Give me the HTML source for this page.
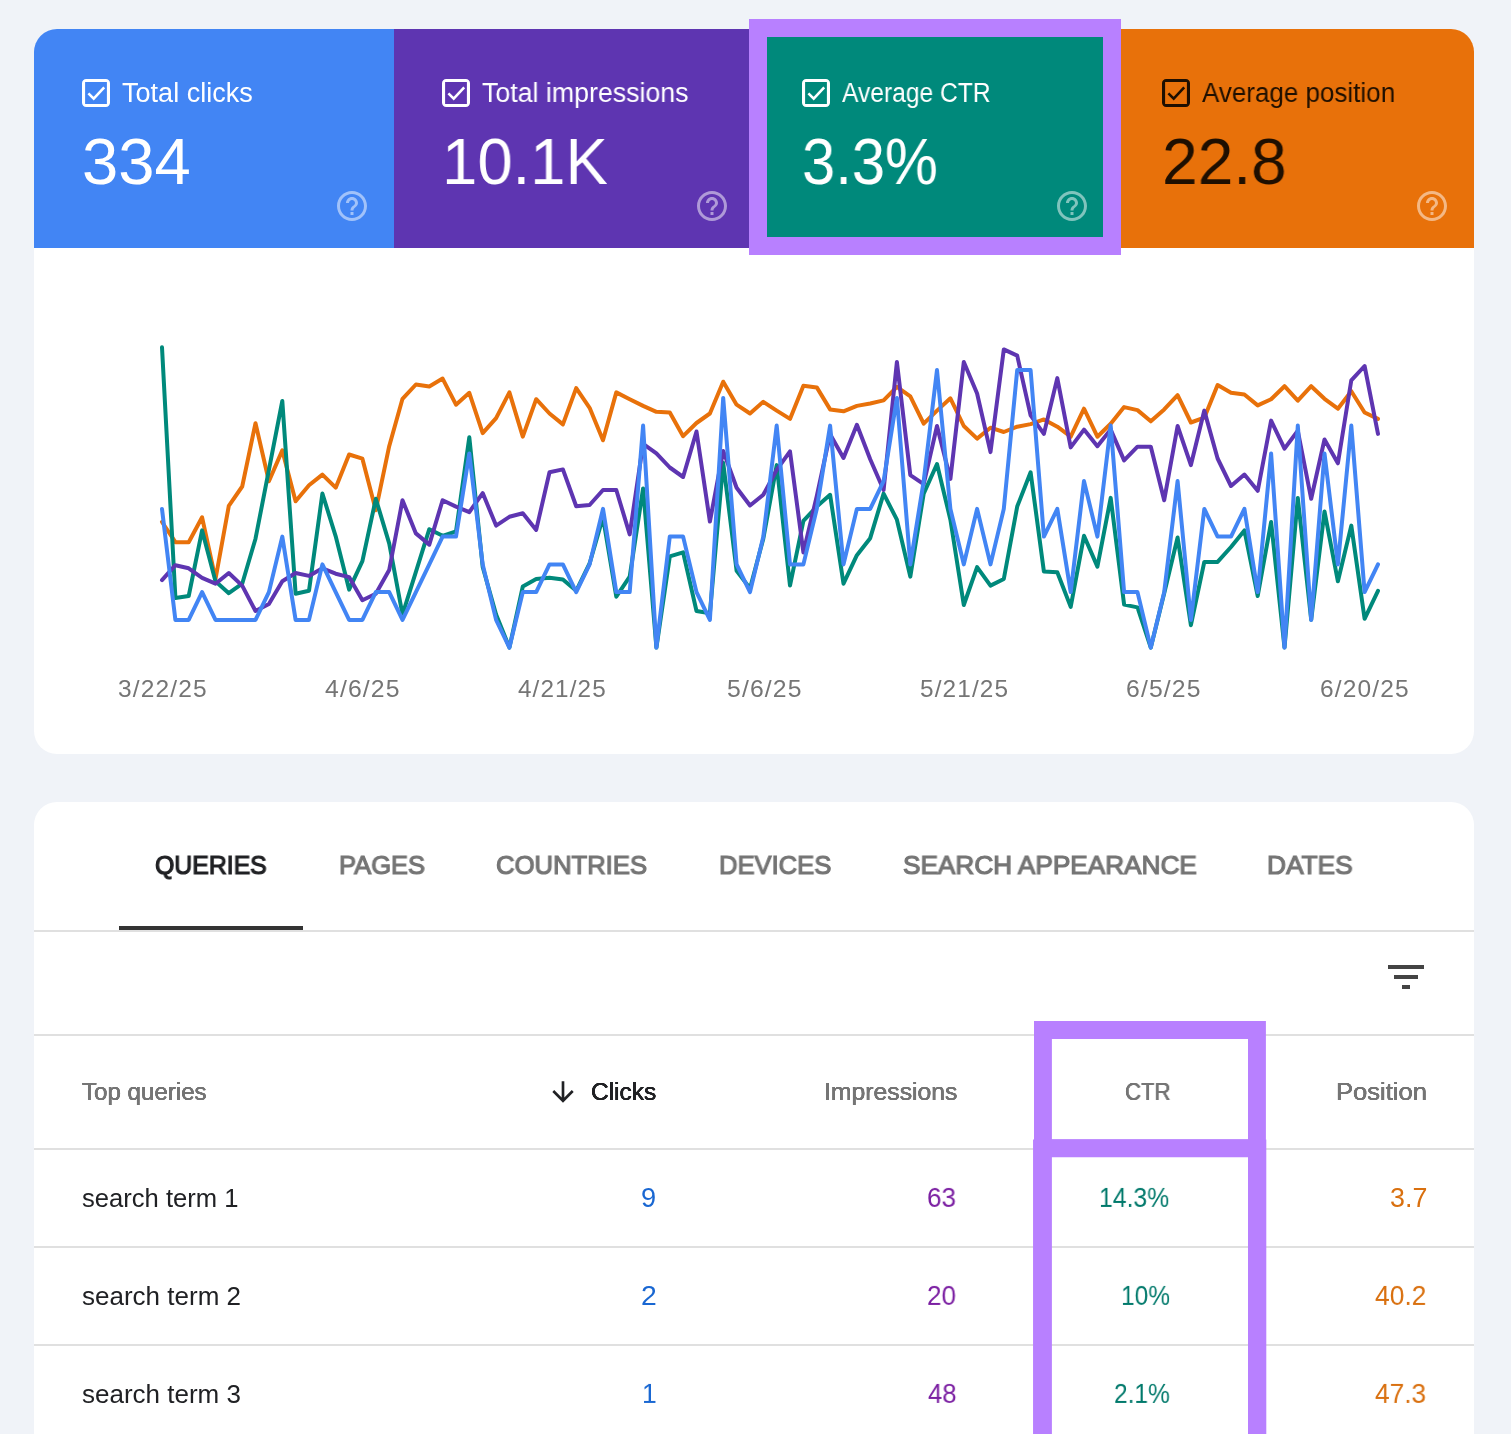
<!DOCTYPE html>
<html lang="en"><head><meta charset="utf-8"><title>Search Console performance</title>
<style>
html,body{margin:0;padding:0}
html{width:1511px;height:1434px;overflow:hidden;background:#f0f3f8}
body{width:1511px;height:1434px;overflow:hidden;background:#f0f3f8;font-family:"Liberation Sans", Arial, sans-serif;position:relative}
.abs{position:absolute;display:block}
.t{position:absolute;white-space:nowrap;transform-origin:0 0;font-weight:400;will-change:transform}
.card{position:absolute;left:34px;width:1440px;background:#fff;border-radius:23px;overflow:hidden}
.m{position:absolute;top:0;width:360px;height:219px}
.hl{position:absolute;box-sizing:border-box;border:18px solid #b880ff}
.ln{position:absolute;left:34px;width:1440px;height:2px;background:#e0e0e0}
</style></head><body>
<div class="card" style="top:29px;height:725px">
  <div class="m" style="left:0;background:#4285f4"></div>
  <div class="m" style="left:360px;background:#5e35b1"></div>
  <div class="m" style="left:720px;background:#00897b"></div>
  <div class="m" style="left:1080px;background:#e8710a"></div>
</div>
<div class="card" style="top:802px;height:632px;border-radius:23px 23px 0 0"></div>
<svg class="abs" style="left:82px;top:79px" width="28" height="28" viewBox="0 0 28 28"><path fill="#fff" fill-rule="evenodd" d="M4.2 0H23.8A4.2 4.2 0 0 1 28 4.2V23.8A4.2 4.2 0 0 1 23.8 28H4.2A4.2 4.2 0 0 1 0 23.8V4.2A4.2 4.2 0 0 1 4.2 0Z M3.1 3.1V24.9H24.9V3.1Z"/><polyline points="6.4,14.4 11.7,19.6 22.2,8.4" fill="none" stroke="#fff" stroke-width="2.6"/></svg><svg class="abs" style="left:442px;top:79px" width="28" height="28" viewBox="0 0 28 28"><path fill="#fff" fill-rule="evenodd" d="M4.2 0H23.8A4.2 4.2 0 0 1 28 4.2V23.8A4.2 4.2 0 0 1 23.8 28H4.2A4.2 4.2 0 0 1 0 23.8V4.2A4.2 4.2 0 0 1 4.2 0Z M3.1 3.1V24.9H24.9V3.1Z"/><polyline points="6.4,14.4 11.7,19.6 22.2,8.4" fill="none" stroke="#fff" stroke-width="2.6"/></svg><svg class="abs" style="left:802px;top:79px" width="28" height="28" viewBox="0 0 28 28"><path fill="#fff" fill-rule="evenodd" d="M4.2 0H23.8A4.2 4.2 0 0 1 28 4.2V23.8A4.2 4.2 0 0 1 23.8 28H4.2A4.2 4.2 0 0 1 0 23.8V4.2A4.2 4.2 0 0 1 4.2 0Z M3.1 3.1V24.9H24.9V3.1Z"/><polyline points="6.4,14.4 11.7,19.6 22.2,8.4" fill="none" stroke="#fff" stroke-width="2.6"/></svg><svg class="abs" style="left:1162px;top:79px" width="28" height="28" viewBox="0 0 28 28"><path fill="#1e0f01" fill-rule="evenodd" d="M4.2 0H23.8A4.2 4.2 0 0 1 28 4.2V23.8A4.2 4.2 0 0 1 23.8 28H4.2A4.2 4.2 0 0 1 0 23.8V4.2A4.2 4.2 0 0 1 4.2 0Z M3.1 3.1V24.9H24.9V3.1Z"/><polyline points="6.4,14.4 11.7,19.6 22.2,8.4" fill="none" stroke="#1e0f01" stroke-width="2.6"/></svg>
<svg class="abs" style="left:334px;top:188px" width="36" height="36" viewBox="0 0 24 24"><path fill="#fff" fill-opacity="0.5" d="M11 18h2v-2h-2v2zm1-16C6.48 2 2 6.48 2 12s4.48 10 10 10 10-4.48 10-10S17.52 2 12 2zm0 18c-4.41 0-8-3.59-8-8s3.59-8 8-8 8 3.59 8 8-3.59 8-8 8zm0-14c-2.21 0-4 1.79-4 4h2c0-1.1.9-2 2-2s2 .9 2 2c0 2-3 1.75-3 5h2c0-2.25 3-2.5 3-5 0-2.21-1.79-4-4-4z"/></svg><svg class="abs" style="left:694px;top:188px" width="36" height="36" viewBox="0 0 24 24"><path fill="#fff" fill-opacity="0.5" d="M11 18h2v-2h-2v2zm1-16C6.48 2 2 6.48 2 12s4.48 10 10 10 10-4.48 10-10S17.52 2 12 2zm0 18c-4.41 0-8-3.59-8-8s3.59-8 8-8 8 3.59 8 8-3.59 8-8 8zm0-14c-2.21 0-4 1.79-4 4h2c0-1.1.9-2 2-2s2 .9 2 2c0 2-3 1.75-3 5h2c0-2.25 3-2.5 3-5 0-2.21-1.79-4-4-4z"/></svg><svg class="abs" style="left:1054px;top:188px" width="36" height="36" viewBox="0 0 24 24"><path fill="#fff" fill-opacity="0.5" d="M11 18h2v-2h-2v2zm1-16C6.48 2 2 6.48 2 12s4.48 10 10 10 10-4.48 10-10S17.52 2 12 2zm0 18c-4.41 0-8-3.59-8-8s3.59-8 8-8 8 3.59 8 8-3.59 8-8 8zm0-14c-2.21 0-4 1.79-4 4h2c0-1.1.9-2 2-2s2 .9 2 2c0 2-3 1.75-3 5h2c0-2.25 3-2.5 3-5 0-2.21-1.79-4-4-4z"/></svg><svg class="abs" style="left:1414px;top:188px" width="36" height="36" viewBox="0 0 24 24"><path fill="#fff" fill-opacity="0.5" d="M11 18h2v-2h-2v2zm1-16C6.48 2 2 6.48 2 12s4.48 10 10 10 10-4.48 10-10S17.52 2 12 2zm0 18c-4.41 0-8-3.59-8-8s3.59-8 8-8 8 3.59 8 8-3.59 8-8 8zm0-14c-2.21 0-4 1.79-4 4h2c0-1.1.9-2 2-2s2 .9 2 2c0 2-3 1.75-3 5h2c0-2.25 3-2.5 3-5 0-2.21-1.79-4-4-4z"/></svg>
<svg class="abs" style="left:0;top:0" width="1511" height="300" viewBox="0 0 1511 300"><path fill="#b880ff" fill-rule="evenodd" d="M749 19H1121V255H749Z M767 37H1103V237H767Z"/></svg>
<svg class="abs" style="left:0;top:0" width="1511" height="760" viewBox="0 0 1511 760">
<polyline points="162.0,522.0 175.4,542.2 188.7,542.2 202.1,517.3 215.5,579.0 228.8,505.9 242.2,486.5 255.5,423.2 268.9,481.3 282.3,450.4 295.6,501.2 309.0,485.3 322.4,474.6 335.7,487.7 349.1,454.5 362.4,458.7 375.8,510.2 389.2,446.2 402.5,398.8 415.9,384.5 429.3,386.4 442.6,378.6 456.0,404.7 469.3,392.8 482.7,433.1 496.1,418.2 509.4,392.4 522.8,436.7 536.2,399.2 549.5,413.5 562.9,424.4 576.2,388.1 589.6,407.8 603.0,440.3 616.3,392.4 629.7,399.2 643.1,405.9 656.4,411.8 669.8,412.5 683.1,436.2 696.5,423.0 709.9,413.5 723.2,381.7 736.6,404.7 750.0,413.5 763.3,401.8 776.7,410.6 790.0,418.9 803.4,385.7 816.8,387.4 830.1,409.4 843.5,411.3 856.9,405.9 870.2,403.5 883.6,400.4 896.9,386.9 910.3,396.4 923.7,423.7 937.0,410.6 950.4,398.3 963.8,426.0 977.1,438.6 990.5,427.7 1003.8,432.0 1017.2,426.7 1030.6,424.1 1043.9,419.4 1057.3,426.7 1070.7,436.7 1084.0,408.7 1097.4,436.7 1110.7,423.7 1124.1,407.1 1137.5,410.1 1150.8,421.3 1164.2,409.4 1177.6,395.2 1190.9,422.5 1204.3,417.7 1217.6,385.0 1231.0,392.8 1244.4,394.5 1257.7,405.4 1271.1,399.2 1284.5,386.2 1297.8,400.7 1311.2,386.2 1324.5,398.8 1337.9,408.7 1351.3,391.2 1364.6,412.5 1378.0,418.9" fill="none" stroke="#e8710a" stroke-width="4" stroke-linejoin="round" stroke-linecap="round"/>
<polyline points="162.0,347.3 175.4,597.9 188.7,596.0 202.1,530.4 215.5,581.3 228.8,593.2 242.2,583.7 255.5,538.7 268.9,469.9 282.3,401.0 295.6,593.7 309.0,590.8 322.4,493.6 335.7,536.3 349.1,589.6 362.4,561.2 375.8,498.8 389.2,543.4 402.5,614.5 415.9,571.8 429.3,529.2 442.6,535.8 456.0,531.5 469.3,437.2 482.7,567.0 496.1,614.5 509.4,647.6 522.8,586.5 536.2,579.0 549.5,577.8 562.9,579.4 576.2,590.8 589.6,563.5 603.0,517.3 616.3,596.7 629.7,576.6 643.1,488.4 656.4,647.6 669.8,556.4 683.1,552.4 696.5,611.0 709.9,613.3 723.2,462.8 736.6,570.7 750.0,588.4 763.3,538.7 776.7,465.1 790.0,585.6 803.4,520.9 816.8,506.6 830.1,494.8 843.5,583.7 856.9,555.2 870.2,538.2 883.6,493.6 896.9,519.7 910.3,576.6 923.7,493.6 937.0,464.0 950.4,519.7 963.8,605.0 977.1,567.1 990.5,585.6 1003.8,579.0 1017.2,506.6 1030.6,472.3 1043.9,571.4 1057.3,572.3 1070.7,606.9 1084.0,535.8 1097.4,566.6 1110.7,497.9 1124.1,604.6 1137.5,607.4 1150.8,647.6 1164.2,593.2 1177.6,537.5 1190.9,625.2 1204.3,561.9 1217.6,561.9 1231.0,547.0 1244.4,530.4 1257.7,596.0 1271.1,522.0 1284.5,647.6 1297.8,497.9 1311.2,619.7 1324.5,511.4 1337.9,581.3 1351.3,525.6 1364.6,618.8 1378.0,590.8" fill="none" stroke="#00897b" stroke-width="4" stroke-linejoin="round" stroke-linecap="round"/>
<polyline points="162.0,580.1 175.4,565.2 188.7,568.3 202.1,577.8 215.5,583.7 228.8,573.0 242.2,585.6 255.5,611.0 268.9,603.9 282.3,581.3 295.6,573.0 309.0,575.9 322.4,568.3 335.7,573.7 349.1,577.1 362.4,600.3 375.8,593.7 389.2,570.0 402.5,500.2 415.9,533.4 429.3,544.6 442.6,500.2 456.0,506.6 469.3,512.1 482.7,493.1 496.1,525.6 509.4,516.8 522.8,513.3 536.2,529.9 549.5,472.3 562.9,469.4 576.2,506.2 589.6,505.0 603.0,490.0 616.3,490.0 629.7,534.4 643.1,443.8 656.4,453.3 669.8,467.5 683.1,477.0 696.5,431.5 709.9,521.6 723.2,450.9 736.6,487.7 750.0,505.5 763.3,494.8 776.7,469.9 790.0,451.4 803.4,552.4 816.8,496.0 830.1,434.3 843.5,458.0 856.9,424.8 870.2,459.2 883.6,490.0 896.9,362.0 910.3,475.1 923.7,484.1 937.0,426.0 950.4,478.9 963.8,362.0 977.1,393.5 990.5,452.1 1003.8,349.4 1017.2,355.6 1030.6,415.4 1043.9,433.9 1057.3,378.1 1070.7,447.4 1084.0,429.6 1097.4,446.2 1110.7,429.6 1124.1,460.4 1137.5,446.7 1150.8,446.7 1164.2,500.2 1177.6,426.0 1190.9,465.1 1204.3,410.6 1217.6,458.5 1231.0,486.0 1244.4,474.6 1257.7,490.8 1271.1,420.6 1284.5,448.6 1297.8,430.8 1311.2,498.8 1324.5,439.5 1337.9,463.3 1351.3,380.3 1364.6,366.0 1378.0,433.9" fill="none" stroke="#5e35b1" stroke-width="4" stroke-linejoin="round" stroke-linecap="round"/>
<polyline points="162.0,508.9 175.4,619.9 188.7,619.9 202.1,592.1 215.5,619.9 228.8,619.9 242.2,619.9 255.5,619.9 268.9,592.1 282.3,536.6 295.6,619.9 309.0,619.9 322.4,564.4 335.7,592.1 349.1,619.9 362.4,619.9 375.8,592.1 389.2,592.1 402.5,619.9 415.9,592.1 429.3,564.4 442.6,536.6 456.0,536.6 469.3,453.4 482.7,564.4 496.1,619.9 509.4,647.6 522.8,592.1 536.2,592.1 549.5,564.4 562.9,564.4 576.2,592.1 589.6,564.4 603.0,508.9 616.3,592.1 629.7,592.1 643.1,425.6 656.4,647.6 669.8,536.6 683.1,536.6 696.5,592.1 709.9,619.9 723.2,397.9 736.6,564.4 750.0,592.1 763.3,536.6 776.7,425.6 790.0,564.4 803.4,564.4 816.8,508.9 830.1,425.6 843.5,564.4 856.9,508.9 870.2,508.9 883.6,481.1 896.9,397.9 910.3,564.4 923.7,481.1 937.0,370.1 950.4,508.9 963.8,564.4 977.1,508.9 990.5,564.4 1003.8,508.9 1017.2,370.1 1030.6,370.1 1043.9,536.6 1057.3,508.9 1070.7,592.1 1084.0,481.1 1097.4,536.6 1110.7,425.6 1124.1,592.1 1137.5,592.1 1150.8,647.6 1164.2,592.1 1177.6,481.1 1190.9,619.9 1204.3,508.9 1217.6,536.6 1231.0,536.6 1244.4,508.9 1257.7,592.1 1271.1,453.4 1284.5,647.6 1297.8,425.6 1311.2,619.9 1324.5,453.4 1337.9,564.4 1351.3,425.6 1364.6,592.1 1378.0,564.4" fill="none" stroke="#4285f4" stroke-width="4" stroke-linejoin="round" stroke-linecap="round"/>
</svg>
<div class="abs" style="left:119px;top:926px;width:184px;height:4px;background:#333"></div>
<div class="ln" style="top:930px"></div>
<div class="ln" style="top:1034px"></div>
<div class="ln" style="top:1148px"></div>
<div class="ln" style="top:1246px"></div>
<div class="ln" style="top:1344px"></div>
<svg class="abs" style="left:1382px;top:953px" width="48" height="48" viewBox="0 0 24 24"><path fill="#444" d="M10 18h4v-2h-4v2zM3 6v2h18V6H3zm3 7h12v-2H6v2z"/></svg>
<svg class="abs" style="left:547px;top:1075.6px" width="32" height="32" viewBox="0 0 24 24"><path fill="#202124" d="M20 12l-1.41-1.41L13 16.17V4h-2v12.17l-5.58-5.59L4 12l8 8 8-8z"/></svg>
<svg class="abs" style="left:0;top:1000px" width="1511" height="434" viewBox="0 1000 1511 434"><path fill="#b880ff" fill-rule="evenodd" d="M1033.05 1139.4H1266.3V1500H1033.05Z M1051.9 1157.2H1248V1490H1051.9Z"/><path fill="#b880ff" fill-rule="evenodd" d="M1034 1021H1265.9V1157H1034Z M1051.9 1039H1248V1139.3H1051.9Z"/></svg>
<div class="t" style="left:122.28px;top:80.10px;font-size:27px;line-height:27px;color:#fff;transform:scale(1.0018,1.0000);">Total clicks</div>
<div class="t" style="left:481.99px;top:80.10px;font-size:27px;line-height:27px;color:#fff;transform:scale(0.9905,1.0000);">Total impressions</div>
<div class="t" style="left:842.16px;top:80.10px;font-size:27px;line-height:27px;color:#fff;transform:scale(0.9116,1.0000);">Average CTR</div>
<div class="t" style="left:1202.34px;top:80.10px;font-size:27px;line-height:27px;color:#1e0f01;transform:scale(0.9626,1.0000);">Average position</div>
<div class="t" style="left:81.91px;top:129.40px;font-size:65px;line-height:65px;color:#fff;transform:scale(1.0028,1.0000);">334</div>
<div class="t" style="left:442.02px;top:129.40px;font-size:65px;line-height:65px;color:#fff;transform:scale(0.9763,1.0000);">10.1K</div>
<div class="t" style="left:801.94px;top:129.40px;font-size:65px;line-height:65px;color:#fff;transform:scale(0.9181,1.0000);">3.3%</div>
<div class="t" style="left:1161.56px;top:129.40px;font-size:65px;line-height:65px;color:#1e0f01;transform:scale(0.9863,1.0000);">22.8</div>
<div class="t" style="left:117.64px;top:677.05px;font-size:24px;line-height:24px;color:#757575;transform:scale(1.0214,1.0000);letter-spacing:1.1px;">3/22/25</div>
<div class="t" style="left:324.83px;top:677.05px;font-size:24px;line-height:24px;color:#757575;transform:scale(1.0320,1.0000);letter-spacing:1.1px;">4/6/25</div>
<div class="t" style="left:518.24px;top:677.05px;font-size:24px;line-height:24px;color:#757575;transform:scale(1.0120,1.0000);letter-spacing:1.1px;">4/21/25</div>
<div class="t" style="left:727.00px;top:677.05px;font-size:24px;line-height:24px;color:#757575;transform:scale(1.0310,1.0000);letter-spacing:1.1px;">5/6/25</div>
<div class="t" style="left:920.12px;top:677.05px;font-size:24px;line-height:24px;color:#757575;transform:scale(1.0158,1.0000);letter-spacing:1.1px;">5/21/25</div>
<div class="t" style="left:1126.48px;top:677.05px;font-size:24px;line-height:24px;color:#757575;transform:scale(1.0313,1.0000);letter-spacing:1.1px;">6/5/25</div>
<div class="t" style="left:1319.69px;top:677.05px;font-size:24px;line-height:24px;color:#757575;transform:scale(1.0219,1.0000);letter-spacing:1.1px;">6/20/25</div>
<div class="t" style="left:154.94px;top:852.01px;font-size:26.5px;line-height:26.5px;color:#202124;transform:scale(0.9372,1.0000);-webkit-text-stroke:1.2px #202124;">QUERIES</div>
<div class="t" style="left:338.58px;top:852.01px;font-size:26.5px;line-height:26.5px;color:#757575;transform:scale(0.9622,1.0000);-webkit-text-stroke:1.2px #757575;">PAGES</div>
<div class="t" style="left:496.33px;top:852.01px;font-size:26.5px;line-height:26.5px;color:#757575;transform:scale(0.9676,1.0000);-webkit-text-stroke:1.2px #757575;">COUNTRIES</div>
<div class="t" style="left:718.68px;top:852.01px;font-size:26.5px;line-height:26.5px;color:#757575;transform:scale(0.9650,1.0000);-webkit-text-stroke:1.2px #757575;">DEVICES</div>
<div class="t" style="left:902.72px;top:852.01px;font-size:26.5px;line-height:26.5px;color:#757575;transform:scale(0.9878,1.0000);-webkit-text-stroke:1.2px #757575;">SEARCH APPEARANCE</div>
<div class="t" style="left:1267.44px;top:852.01px;font-size:26.5px;line-height:26.5px;color:#757575;transform:scale(0.9917,1.0000);-webkit-text-stroke:1.2px #757575;">DATES</div>
<div class="t" style="left:82.28px;top:1081.10px;font-size:23px;line-height:23px;color:#757575;transform:scale(1.0482,1.0000);text-shadow:0.22px 0 0 #757575,-0.22px 0 0 #757575,0 0.13px 0 #757575,0 -0.13px 0 #757575;">Top queries</div>
<div class="t" style="left:590.84px;top:1081.10px;font-size:23px;line-height:23px;color:#202124;transform:scale(1.0643,1.0000);text-shadow:0.22px 0 0 #202124,-0.22px 0 0 #202124,0 0.13px 0 #202124,0 -0.13px 0 #202124;">Clicks</div>
<div class="t" style="left:823.58px;top:1081.10px;font-size:23px;line-height:23px;color:#757575;transform:scale(1.0762,1.0000);text-shadow:0.22px 0 0 #757575,-0.22px 0 0 #757575,0 0.13px 0 #757575,0 -0.13px 0 #757575;">Impressions</div>
<div class="t" style="left:1124.54px;top:1081.10px;font-size:23px;line-height:23px;color:#757575;transform:scale(0.9609,1.0000);text-shadow:0.22px 0 0 #757575,-0.22px 0 0 #757575,0 0.13px 0 #757575,0 -0.13px 0 #757575;">CTR</div>
<div class="t" style="left:1335.85px;top:1081.10px;font-size:23px;line-height:23px;color:#757575;transform:scale(1.1123,1.0000);text-shadow:0.22px 0 0 #757575,-0.22px 0 0 #757575,0 0.13px 0 #757575,0 -0.13px 0 #757575;">Position</div>
<div class="t" style="left:81.89px;top:1186.00px;font-size:25.5px;line-height:25.5px;color:#202124;transform:scale(1.0041,1.0000);">search term 1</div>
<div class="t" style="left:81.88px;top:1284.00px;font-size:25.5px;line-height:25.5px;color:#202124;transform:scale(1.0199,1.0000);">search term 2</div>
<div class="t" style="left:81.88px;top:1382.00px;font-size:25.5px;line-height:25.5px;color:#202124;transform:scale(1.0195,1.0000);">search term 3</div>
<div class="t" style="left:641.23px;top:1183.84px;font-size:26.5px;line-height:26.5px;color:#1967d2;transform:scale(1.0250,1.0574);">9</div>
<div class="t" style="left:641.06px;top:1281.84px;font-size:26.5px;line-height:26.5px;color:#1967d2;transform:scale(1.0701,1.0574);">2</div>
<div class="t" style="left:641.58px;top:1379.84px;font-size:26.5px;line-height:26.5px;color:#1967d2;transform:scale(0.9990,1.0574);">1</div>
<div class="t" style="left:927.43px;top:1183.84px;font-size:26.5px;line-height:26.5px;color:#7b1fa2;transform:scale(0.9836,1.0574);">63</div>
<div class="t" style="left:927.48px;top:1281.84px;font-size:26.5px;line-height:26.5px;color:#7b1fa2;transform:scale(0.9835,1.0574);">20</div>
<div class="t" style="left:928.00px;top:1379.84px;font-size:26.5px;line-height:26.5px;color:#7b1fa2;transform:scale(0.9685,1.0574);">48</div>
<div class="t" style="left:1099.41px;top:1183.84px;font-size:26.5px;line-height:26.5px;color:#00796b;transform:scale(0.9351,1.0574);">14.3%</div>
<div class="t" style="left:1120.53px;top:1281.84px;font-size:26.5px;line-height:26.5px;color:#00796b;transform:scale(0.9246,1.0574);">10%</div>
<div class="t" style="left:1113.75px;top:1379.84px;font-size:26.5px;line-height:26.5px;color:#00796b;transform:scale(0.9259,1.0574);">2.1%</div>
<div class="t" style="left:1389.56px;top:1183.84px;font-size:26.5px;line-height:26.5px;color:#d9700f;transform:scale(1.0125,1.0574);">3.7</div>
<div class="t" style="left:1375.39px;top:1281.84px;font-size:26.5px;line-height:26.5px;color:#d9700f;transform:scale(0.9972,1.0574);">40.2</div>
<div class="t" style="left:1375.39px;top:1379.84px;font-size:26.5px;line-height:26.5px;color:#d9700f;transform:scale(0.9917,1.0574);">47.3</div>
</body></html>
